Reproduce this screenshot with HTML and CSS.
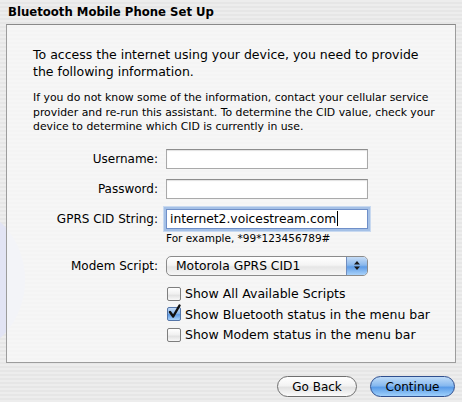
FILE: index.html
```html
<!DOCTYPE html>
<html>
<head>
<meta charset="utf-8">
<link rel="stylesheet" href="styles.css">
</head>
<body>
<div class="window">
  <div class="watermark"></div>
  <div class="title">Bluetooth Mobile Phone Set Up</div>
  <div class="panel">
    <p class="lead">To access the internet using your device, you need to provide<br>the following information.</p>
    <p class="note">If you do not know some of the information, contact your cellular service<br>provider and re-run this assistant. To determine the CID value, check your<br>device to determine which CID is currently in use.</p>
    <div class="row r-user">
      <label class="lbl">Username:</label>
      <div class="field"></div>
    </div>
    <div class="row r-pass">
      <label class="lbl">Password:</label>
      <div class="field"></div>
    </div>
    <div class="row r-gprs">
      <label class="lbl">GPRS CID String:</label>
      <div class="field focus"><span class="val">internet2.voicestream.com</span><span class="caret"></span></div>
    </div>
    <div class="row r-hint">
      <span class="lbl"></span>
      <span class="hint">For example, *99*123456789#</span>
    </div>
    <div class="row r-modem">
      <label class="lbl">Modem Script:</label>
      <div class="popup">
        <span class="popup-text">Motorola GPRS CID1</span>
        <span class="popup-cap">
          <svg width="8" height="11" viewBox="0 0 8 11"><path d="M4 1 L7 4.5 H1 Z M4 10 L7 6.5 H1 Z" fill="#1a1a1a"/></svg>
        </span>
      </div>
    </div>
    <div class="checks">
      <div class="check"><span class="box"></span><span>Show All Available Scripts</span></div>
      <div class="check"><span class="box on"><svg width="15" height="16" viewBox="0 0 15 16"><path d="M3 8 L6.2 12.5 L12.5 1.5" fill="none" stroke="#111" stroke-width="2.4" stroke-linecap="round" stroke-linejoin="round"/></svg></span><span>Show Bluetooth status in the menu bar</span></div>
      <div class="check"><span class="box"></span><span>Show Modem status in the menu bar</span></div>
    </div>
  </div>
  <div class="buttons">
    <button class="btn back">Go Back</button>
    <button class="btn cont">Continue</button>
  </div>
</div>
</body>
</html>
```

FILE: styles.css
```css
html, body {
  margin: 0;
  padding: 0;
}
body {
  width: 462px;
  height: 402px;
  overflow: hidden;
  font-family: "DejaVu Sans", "Noto Sans", sans-serif;
  color: #000;
  background: repeating-linear-gradient(to bottom, #ededed 0, #ededed 2px, #e6e6e6 2px, #e6e6e6 4px);
}
.window {
  position: relative;
  width: 462px;
  height: 402px;
}
.watermark {
  position: absolute;
  left: -110px;
  top: 205px;
  width: 135px;
  height: 150px;
  border-radius: 50%;
  background: #e2e4f4;
}
.title {
  position: relative;
  font-weight: bold;
  font-size: 11.7px;
  height: 24px;
  line-height: 24px;
  padding-left: 8px;
}
.panel {
  position: relative;
  margin-left: 6px;
  width: 448px;
  height: 337px;
  border: 1px solid #9c9c9c;
  border-top-color: #8a8a8a;
  background: rgba(250, 250, 250, 0.72);
  font-size: 12px;
}
.lead {
  margin: 21px 0 0 26px;
  white-space: nowrap;
  line-height: 17px;
  font-size: 12.5px;
}
.note {
  margin: 11px 0 0 26px;
  white-space: nowrap;
  font-size: 10.85px;
  line-height: 14.5px;
}
.row {
  display: flex;
  align-items: center;
  gap: 8px;
}
.lbl {
  width: 151px;
  text-align: right;
  flex: none;
}
.r-user { margin-top: 14px; }
.r-pass { margin-top: 10px; }
.r-gprs { margin-top: 10px; }
.r-hint { margin-top: 2px; height: 14px; }
.r-modem { margin-top: 11px; }
.field {
  box-sizing: border-box;
  width: 202px;
  height: 20px;
  background: #fff;
  border: 1px solid #a9a9a9;
  border-top-color: #8e8e8e;
  box-shadow: inset 0 1px 1px rgba(0,0,0,0.12);
  display: flex;
  align-items: center;
  padding-left: 3px;
}
.field.focus {
  border-color: #6f8fc8;
  box-shadow: 0 0 0 2px #a4c0e6, 0 0 0 3px #c8d9f0;
  font-size: 12.3px;
}
.caret {
  display: inline-block;
  width: 1px;
  height: 15px;
  background: #000;
  margin-left: 1px;
}
.hint {
  font-size: 10.5px;
  line-height: 14px;
}
.popup {
  box-sizing: border-box;
  width: 202px;
  height: 20px;
  border: 1px solid #8b8b8b;
  border-radius: 5px;
  background: linear-gradient(to bottom, #ffffff 0%, #f4f4f4 45%, #e6e6e6 55%, #f6f6f6 100%);
  display: flex;
  align-items: center;
  overflow: hidden;
  font-size: 12.3px;
}
.popup-text {
  flex: 1;
  padding-left: 9px;
}
.popup-cap {
  width: 20px;
  height: 100%;
  display: flex;
  align-items: center;
  justify-content: center;
  border-left: 1px solid #6f8dbf;
  background: linear-gradient(to bottom, #c6dcf6 0%, #8ab8ec 45%, #5f9ce6 55%, #a9d2fa 100%);
}
.checks {
  margin-top: 11px;
  margin-left: 160px;
  display: flex;
  flex-direction: column;
  gap: 6.5px;
  font-size: 12.5px;
}
.check {
  display: flex;
  align-items: center;
  gap: 4px;
  height: 14px;
}
.box {
  box-sizing: border-box;
  width: 14px;
  height: 14px;
  border: 1px solid #7e7e7e;
  border-radius: 2px;
  background: linear-gradient(to bottom, #ffffff 0%, #f0f0f0 50%, #e2e2e2 60%, #f8f8f8 100%);
  position: relative;
  flex: none;
}
.box.on {
  border-color: #5475a8;
  background: linear-gradient(to bottom, #c3dbf7 0%, #8ab7ec 45%, #5f9ce6 55%, #a9d2fa 100%);
}
.box.on svg {
  position: absolute;
  left: -1px;
  top: -4px;
}
.buttons {
  display: flex;
  justify-content: flex-end;
  gap: 13px;
  padding: 13px 7px 0 0;
}
.btn {
  box-sizing: border-box;
  height: 21px;
  border-radius: 11px;
  font-family: "DejaVu Sans", "Noto Sans", sans-serif;
  font-size: 12px;
  color: #000;
  padding: 0;
}
.back {
  width: 80px;
  border: 1px solid #6f6f6f;
  background: linear-gradient(to bottom, #ffffff 0%, #f3f3f3 45%, #e2e2e2 55%, #fbfbfb 100%);
}
.cont {
  width: 85px;
  border: 1px solid #2f4f8f;
  background: linear-gradient(to bottom, #c0dcf8 0%, #87b9ef 45%, #5a9ce8 55%, #9fd0fb 100%);
}
```
